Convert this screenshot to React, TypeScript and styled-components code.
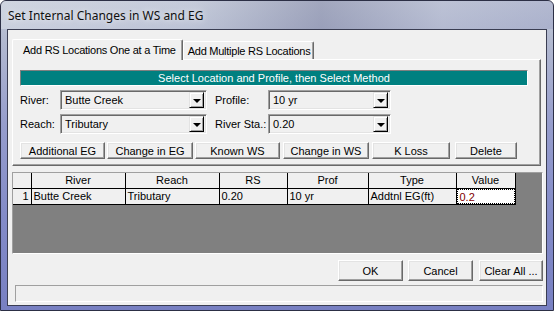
import styled, { createGlobalStyle } from "styled-components";

const GlobalStyle = createGlobalStyle`
  html, body {
    margin: 0;
    padding: 0;
    background: #ffffff;
  }
  body {
    font-family: "Liberation Sans", Arial, sans-serif;
    font-size: 11px;
    color: #000;
  }
`;

const Window = styled.div`
  width: 554px;
  height: 311px;
  box-sizing: border-box;
  border: 1px solid #2c2f45;
  border-radius: 6px 6px 0 0;
  background: linear-gradient(
    180deg,
    #c4cad8 0%,
    #b3bad0 12%,
    #969dcc 40%,
    #838bc8 70%,
    #7880c2 100%
  );
  display: flex;
  flex-direction: column;
  overflow: hidden;
`;

const TitleBar = styled.div`
  height: 28px;
  display: flex;
  align-items: center;
  padding-left: 7px;
  font-family: "Noto Sans", "Open Sans", sans-serif;
  font-size: 12px;
  color: #101010;
  text-shadow: 0 0 6px rgba(255, 255, 255, 0.9);
  background: linear-gradient(
    90deg,
    rgba(215, 220, 230, 0.6) 0%,
    rgba(200, 206, 222, 0.3) 35%,
    rgba(110, 114, 150, 0.4) 58%,
    rgba(175, 180, 208, 0.35) 80%,
    rgba(140, 146, 190, 0.3) 100%
  );
`;

const Client = styled.div`
  flex: 1;
  margin: 0 6px 4px 6px;
  background: #f0f0f0;
  border: 1px solid #3a3d52;
  padding: 9px 3px 3px 4px;
  display: flex;
  flex-direction: column;
`;

const TabStrip = styled.div`
  height: 20px;
  display: flex;
  align-items: flex-end;
  position: relative;
  z-index: 1;
`;

const Tab = styled.div<{ $active?: boolean }>`
  box-sizing: border-box;
  height: ${(p) => (p.$active ? "21px" : "18px")};
  margin-bottom: ${(p) => (p.$active ? "-1px" : "0")};
  padding: 0 ${(p) => (p.$active ? "6px" : "3px")} 0 ${(p) => (p.$active ? "10px" : "4px")};
  display: flex;
  align-items: center;
  background: #f0f0f0;
  border-top: 1px solid #ffffff;
  border-left: 1px solid #ffffff;
  border-right: 1px solid #696969;
  box-shadow: inset -1px 0 0 #a0a0a0;
  border-radius: 2px 2px 0 0;
  white-space: nowrap;
  letter-spacing: -0.25px;
`;

const TabPanel = styled.div`
  box-sizing: border-box;
  width: 529px;
  height: 107px;
  border-top: 1px solid #ffffff;
  border-left: 1px solid #ffffff;
  border-right: 1px solid #696969;
  border-bottom: 1px solid #696969;
  box-shadow: inset -1px -1px 0 #a0a0a0;
  padding: 10px 0 0 7px;
  display: flex;
  flex-direction: column;
`;

const Banner = styled.div`
  box-sizing: border-box;
  width: 508px;
  height: 16px;
  background: #008080;
  color: #ffffff;
  border-top: 1px solid #808080;
  border-left: 1px solid #808080;
  border-bottom: 1px solid #ffffff;
  border-right: 1px solid #ffffff;
  font-size: 11px;
  line-height: 14px;
  text-align: center;
`;

const FormRow = styled.div`
  display: flex;
  align-items: center;
  height: 20px;
  margin-top: 4px;
`;

const Label = styled.div<{ $w: number; $ml?: number }>`
  width: ${(p) => p.$w}px;
  margin-left: ${(p) => p.$ml ?? 0}px;
  font-size: 11px;
  white-space: nowrap;
`;

const Combo = styled.div<{ $w: number }>`
  box-sizing: border-box;
  width: ${(p) => p.$w}px;
  height: 20px;
  border-top: 1px solid #a0a0a0;
  border-left: 1px solid #a0a0a0;
  border-right: 1px solid #ffffff;
  border-bottom: 1px solid #ffffff;
  box-shadow: inset 1px 1px 0 #696969, inset -1px -1px 0 #e3e3e3;
  background: #f0f0f0;
  display: flex;
  align-items: center;
  padding: 2px 2px 2px 4px;
`;

const ComboText = styled.div`
  flex: 1;
  white-space: nowrap;
`;

const DropButton = styled.div`
  box-sizing: border-box;
  width: 15px;
  height: 16px;
  background: #f0f0f0;
  border-top: 1px solid #e3e3e3;
  border-left: 1px solid #e3e3e3;
  border-right: 1px solid #000;
  border-bottom: 1px solid #000;
  box-shadow: inset 1px 1px 0 #fff, inset -1px -1px 0 #a0a0a0;
  display: flex;
  align-items: center;
  justify-content: center;
`;

const Arrow = styled.div`
  width: 0;
  height: 0;
  border-left: 4px solid transparent;
  border-right: 4px solid transparent;
  border-top: 4px solid #000;
  margin-top: 1px;
`;

const ButtonRow = styled.div<{ $end?: boolean; $mt: number }>`
  display: flex;
  justify-content: ${(p) => (p.$end ? "flex-end" : "flex-start")};
  margin-top: ${(p) => p.$mt}px;
`;

const Button = styled.div<{ $w: number; $h: number; $ml?: number }>`
  box-sizing: border-box;
  width: ${(p) => p.$w}px;
  height: ${(p) => p.$h}px;
  margin-left: ${(p) => p.$ml ?? 0}px;
  background: #f0f0f0;
  border-top: 1px solid #ffffff;
  border-left: 1px solid #ffffff;
  border-right: 1px solid #696969;
  border-bottom: 1px solid #696969;
  box-shadow: inset -1px -1px 0 #a0a0a0, inset 1px 1px 0 #e3e3e3;
  display: flex;
  align-items: center;
  justify-content: center;
  font-size: 11px;
  white-space: nowrap;
`;

const GridBox = styled.div`
  box-sizing: border-box;
  width: 531px;
  height: 82px;
  margin-top: 6px;
  background: #808080;
  border-top: 1px solid #a0a0a0;
  border-left: 1px solid #a0a0a0;
  border-right: 1px solid #ffffff;
  border-bottom: 1px solid #ffffff;
`;

const Table = styled.table`
  border-collapse: collapse;
  table-layout: fixed;
  font-size: 11px;
`;

const Th = styled.th<{ $w: number }>`
  box-sizing: border-box;
  width: ${(p) => p.$w}px;
  height: 15px;
  padding: 0;
  font-weight: normal;
  text-align: center;
  background: #f0f0f0;
  border-right: 1px solid #000;
  border-bottom: 1px solid #000;
  line-height: 14px;
`;

const Td = styled.td<{ $align?: string }>`
  height: 14px;
  padding: 0 2px;
  background: #f0f0f0;
  border-right: 1px solid #000;
  border-bottom: 1px solid #000;
  text-align: ${(p) => p.$align ?? "left"};
  white-space: nowrap;
  overflow: hidden;
  line-height: 14px;
`;

const ValueCell = styled.td`
  height: 14px;
  padding: 0;
  background: #ffffff;
  border-right: 1px solid #000;
  border-bottom: 1px solid #000;
  line-height: 14px;
`;

const ValueEdit = styled.div`
  box-sizing: border-box;
  height: 15px;
  border: 1px dotted #008080;
  outline: 1px dotted #000;
  outline-offset: -1px;
  padding: 0 2px;
  color: #800000;
`;

const StatusBar = styled.div`
  box-sizing: border-box;
  width: 528px;
  height: 17px;
  margin: 4px 0 0 3px;
  border-top: 1px solid #a0a0a0;
  border-left: 1px solid #a0a0a0;
  border-right: 1px solid #ffffff;
  border-bottom: 1px solid #ffffff;
`;

const methodButtons = [
  { label: "Additional EG", w: 85, ml: 0 },
  { label: "Change in EG", w: 86, ml: 2 },
  { label: "Known WS", w: 85, ml: 2 },
  { label: "Change in WS", w: 86, ml: 3 },
  { label: "K Loss", w: 78, ml: 3 },
  { label: "Delete", w: 62, ml: 5 },
];

// widths include the right grid line
const columns = [
  { label: "", w: 18 },
  { label: "River", w: 94 },
  { label: "Reach", w: 94 },
  { label: "RS", w: 68 },
  { label: "Prof", w: 81 },
  { label: "Type", w: 88 },
  { label: "Value", w: 59 },
];

const App = () => {
  return (
    <>
      <GlobalStyle />
      <Window>
        <TitleBar>Set Internal Changes in WS and EG</TitleBar>
        <Client>
          <TabStrip>
            <Tab $active>Add RS Locations One at a Time</Tab>
            <Tab>Add Multiple RS Locations</Tab>
          </TabStrip>
          <TabPanel>
            <Banner>Select Location and Profile, then Select Method</Banner>
            <FormRow>
              <Label $w={40}>River:</Label>
              <Combo $w={147}>
                <ComboText>Butte Creek</ComboText>
                <DropButton>
                  <Arrow />
                </DropButton>
              </Combo>
              <Label $w={53} $ml={8}>
                Profile:
              </Label>
              <Combo $w={123}>
                <ComboText>10 yr</ComboText>
                <DropButton>
                  <Arrow />
                </DropButton>
              </Combo>
            </FormRow>
            <FormRow>
              <Label $w={40}>Reach:</Label>
              <Combo $w={147}>
                <ComboText>Tributary</ComboText>
                <DropButton>
                  <Arrow />
                </DropButton>
              </Combo>
              <Label $w={53} $ml={8}>
                River Sta.:
              </Label>
              <Combo $w={123}>
                <ComboText>0.20</ComboText>
                <DropButton>
                  <Arrow />
                </DropButton>
              </Combo>
            </FormRow>
            <ButtonRow $mt={8}>
              {methodButtons.map((b) => (
                <Button key={b.label} $w={b.w} $h={17} $ml={b.ml}>
                  {b.label}
                </Button>
              ))}
            </ButtonRow>
          </TabPanel>
          <GridBox>
            <Table>
              <thead>
                <tr>
                  {columns.map((c) => (
                    <Th key={c.label || "rowhead"} $w={c.w}>
                      {c.label}
                    </Th>
                  ))}
                </tr>
              </thead>
              <tbody>
                <tr>
                  <Td $align="right">1</Td>
                  <Td>Butte Creek</Td>
                  <Td>Tributary</Td>
                  <Td>0.20</Td>
                  <Td>10 yr</Td>
                  <Td>Addtnl EG(ft)</Td>
                  <ValueCell>
                    <ValueEdit>0.2</ValueEdit>
                  </ValueCell>
                </tr>
              </tbody>
            </Table>
          </GridBox>
          <ButtonRow $end $mt={6}>
            <Button $w={65} $h={21}>
              OK
            </Button>
            <Button $w={65} $h={21} $ml={5}>
              Cancel
            </Button>
            <Button $w={64} $h={21} $ml={6}>
              Clear All ...
            </Button>
          </ButtonRow>
          <StatusBar />
        </Client>
      </Window>
    </>
  );
};

export default App;
